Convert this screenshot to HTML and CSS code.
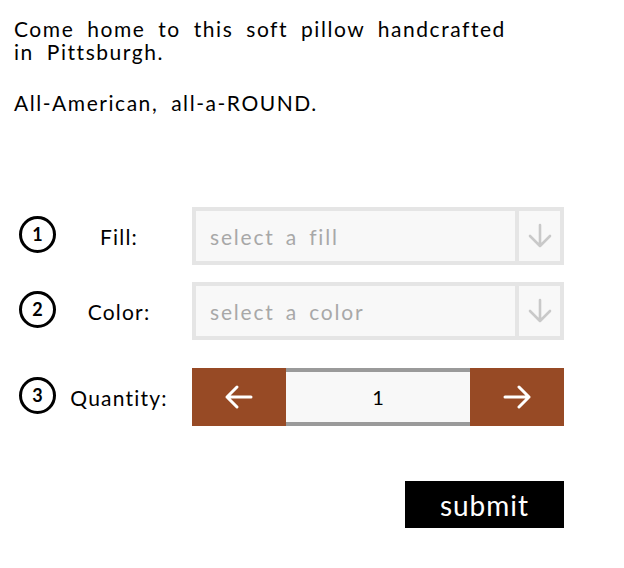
FILE: index.html
```html
<!DOCTYPE html>
<html lang="en">
<head>
<meta charset="utf-8">
<title>Pillow order</title>
<link rel="stylesheet" href="styles.css">
</head>
<body>
<main class="page">
  <p class="intro">Come home to this soft pillow handcrafted<br>in Pittsburgh.</p>
  <p class="intro">All-American, all-a-ROUND.</p>

  <form class="order">
    <div class="row">
      <span class="step">1</span>
      <span class="label">Fill:</span>
      <div class="select">
        <span class="select-text">select a fill</span>
        <span class="select-arrow">
          <svg width="26" height="26" viewBox="0 0 26 26"><path d="M13 2 V23 M3 13 L13 23 L23 13" fill="none" stroke="#c9c9c9" stroke-width="2.6" stroke-linecap="round" stroke-linejoin="round"/></svg>
        </span>
      </div>
    </div>

    <div class="row">
      <span class="step">2</span>
      <span class="label">Color:</span>
      <div class="select">
        <span class="select-text">select a color</span>
        <span class="select-arrow">
          <svg width="26" height="26" viewBox="0 0 26 26"><path d="M13 2 V23 M3 13 L13 23 L23 13" fill="none" stroke="#c9c9c9" stroke-width="2.6" stroke-linecap="round" stroke-linejoin="round"/></svg>
        </span>
      </div>
    </div>

    <div class="row row-qty">
      <span class="step">3</span>
      <span class="label">Quantity:</span>
      <div class="stepper">
        <button type="button" class="step-btn" aria-label="decrease">
          <svg width="30" height="26" viewBox="0 0 30 26"><path d="M27 13 H3 M13 3 L3 13 L13 23" fill="none" stroke="#fff" stroke-width="3" stroke-linecap="round" stroke-linejoin="round"/></svg>
        </button>
        <span class="qty">1</span>
        <button type="button" class="step-btn" aria-label="increase">
          <svg width="30" height="26" viewBox="0 0 30 26"><path d="M3 13 H27 M17 3 L27 13 L17 23" fill="none" stroke="#fff" stroke-width="3" stroke-linecap="round" stroke-linejoin="round"/></svg>
        </button>
      </div>
    </div>

    <div class="actions">
      <button type="button" class="submit">submit</button>
    </div>
  </form>
</main>
</body>
</html>
```

FILE: styles.css
```css
* { box-sizing: border-box; }

body {
  margin: 0;
  background: #fff;
  color: #000;
  font-family: "Lato", "DejaVu Sans", sans-serif;
}

.page {
  padding: 17px 14px 0 14px;
  width: 624px;
}

.intro {
  margin: 0 0 28px 0;
  font-size: 21px;
  line-height: 23px;
  letter-spacing: 1.55px;
  word-spacing: 6px;
}

.order {
  margin-top: 93px;
  display: flex;
  flex-direction: column;
}

.row {
  display: flex;
  align-items: center;
  height: 58px;
  margin-bottom: 17px;
}

.row-qty {
  margin-top: 11px;
  margin-bottom: 0;
}

.step {
  width: 37px;
  height: 37px;
  margin-left: 5px;
  border: 3px solid #000;
  border-radius: 50%;
  display: flex;
  align-items: center;
  justify-content: center;
  font-size: 18px;
  font-weight: 700;
  margin-top: -4px;
}

.label {
  width: 136px;
  padding-right: 10px;
  text-align: center;
  font-size: 21px;
  letter-spacing: 1.2px;
}

.select {
  width: 372px;
  height: 58px;
  border: 4px solid #e5e5e5;
  background: #f8f8f8;
  display: flex;
  align-items: stretch;
}

.select-text {
  flex: 1;
  display: flex;
  align-items: center;
  padding-left: 14px;
  font-size: 21px;
  color: #a8a8a8;
  letter-spacing: 1.8px;
  word-spacing: 4px;
}

.select-arrow {
  width: 45px;
  border-left: 4px solid #e5e5e5;
  display: flex;
  align-items: center;
  justify-content: center;
}

.stepper {
  width: 372px;
  height: 58px;
  display: flex;
}

.step-btn {
  width: 94px;
  border: 0;
  margin: 0;
  padding: 0;
  background: #974a25;
  display: flex;
  align-items: center;
  justify-content: center;
}

.qty {
  flex: 1;
  border-top: 4px solid #9a9a9a;
  border-bottom: 4px solid #9a9a9a;
  background: #f8f8f8;
  display: flex;
  align-items: center;
  justify-content: center;
  font-size: 20px;
}

.actions {
  display: flex;
  justify-content: flex-end;
  margin-top: 55px;
  padding-right: 46px;
}

.submit {
  width: 159px;
  height: 47px;
  border: 0;
  background: #000;
  color: #fff;
  font-family: "Lato", "DejaVu Sans", sans-serif;
  font-size: 28px;
  letter-spacing: 1px;
  padding: 0;
}
```
